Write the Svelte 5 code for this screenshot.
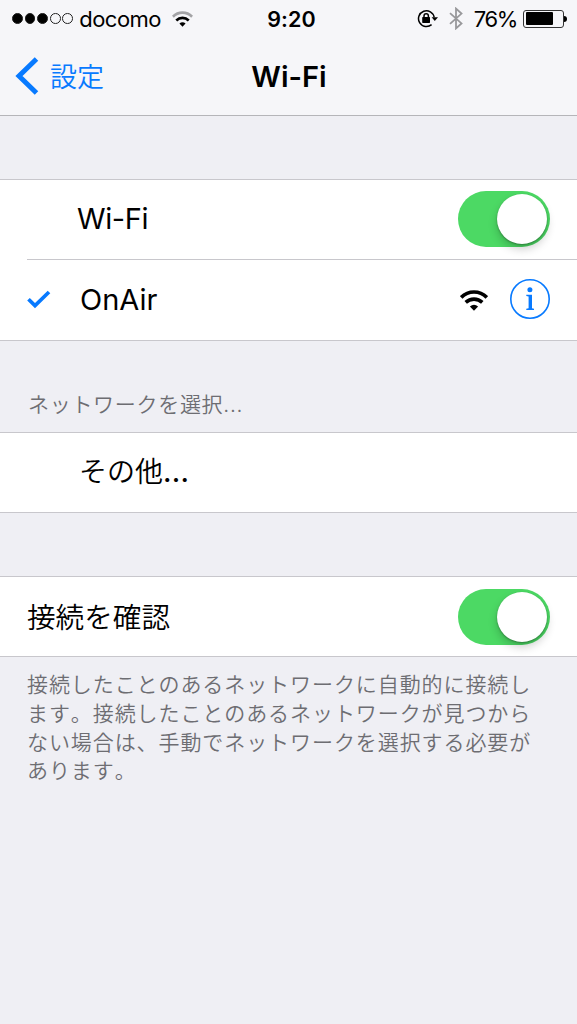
<script>
  let wifi = $state(true);
  let askToJoin = $state(true);
  const signal = [true, true, true, false, false];
  const battery = 76;
  const note = [
    '接続したことのあるネットワークに自動的に接続し',
    'ます。接続したことのあるネットワークが見つから',
    'ない場合は、手動でネットワークを選択する必要が',
    'あります。'
  ];
</script>

{#snippet wifiIcon(cls, outer)}
  <svg class={cls} viewBox="0 0 28 21" fill="none" stroke="#000" stroke-width="3.6">
    <path d="M1.2 7.4C8.4 .2 19.6 .2 26.8 7.4" stroke={outer} />
    <path d="M5.7 12.4C10.4 8 17.6 8 22.3 12.4" />
    <path d="M9.9 16.5Q14 13 18.1 16.5L14 20.8Z" fill="#000" stroke="none" />
  </svg>
{/snippet}

{#snippet toggle(on, label, flip)}
  <button class="switch" class:on role="switch" aria-checked={on} aria-label={label} onclick={flip}>
    <span class="knob"></span>
  </button>
{/snippet}

<main>
  <header>
    <div class="status">
      <div class="left">
        <span class="dots">
          {#each signal as full}<i class:full></i>{/each}
        </span>
        <span class="carrier">docomo</span>
        {@render wifiIcon('wifi-small', '#a3a3a6')}
      </div>
      <span class="time">9:20</span>
      <div class="right">
        <svg class="lock" viewBox="0 0 21 19" fill="none" stroke="#000" stroke-width="1.5">
          <path d="M14.6 15.6A7.9 7.9 0 1 1 17.2 8.3" />
          <path d="M14.6 8.2H21L17.8 12Z" fill="#000" stroke="none" />
          <rect x="5.2" y="8.1" width="7.8" height="5.8" rx=".6" fill="#000" stroke="none" />
          <path d="M7 8.4V6.9a2.2 2.2 0 0 1 4.4 0V8.4" />
        </svg>
        <svg class="bluetooth" viewBox="0 0 14 23" fill="none" stroke="#98989b" stroke-width="1.8">
          <path d="M1 6.2 12.5 16.4 7 21.4V1.6L12.5 6.6 1 16.8" />
        </svg>
        <span class="percent">{battery}%</span>
        <span class="battery"><b style:width="{battery}%"></b></span>
      </div>
    </div>
    <nav>
      <a class="back" href="#settings">
        <svg viewBox="0 0 24 38" fill="none" stroke="#087aff" stroke-width="5">
          <path d="M21.5 2 4 19 21.5 36" />
        </svg>
        <span>設定</span>
      </a>
      <h1>Wi-Fi</h1>
    </nav>
  </header>

  <section class="group networks">
    <div class="row">
      <span class="label wifi-label">Wi-Fi</span>
      {@render toggle(wifi, 'Wi-Fi', () => (wifi = !wifi))}
    </div>
    <div class="row divided">
      <svg class="check" viewBox="0 0 24 19" fill="none" stroke="#087aff" stroke-width="3.7">
        <path d="M1.5 9.2 8 15.6 22 2" />
      </svg>
      <span class="label network">OnAir</span>
      {@render wifiIcon('wifi-large', '#000')}
      <button class="info" aria-label="OnAir">
        <svg viewBox="0 0 40 40">
          <circle cx="20" cy="20" r="19.2" fill="none" stroke="#087aff" stroke-width="1.6" />
          <circle cx="19.9" cy="10.8" r="2.5" fill="#087aff" />
          <path d="M16.3 15.8H22V29.3L24 29.8V31H16.3V29.8L18.6 29.3V17.5L16.3 17Z" fill="#087aff" />
        </svg>
      </button>
    </div>
  </section>

  <h2>ネットワークを選択<span>...</span></h2>
  <section class="group">
    <div class="row"><span class="label other">その他<span class="ellipsis">...</span></span></div>
  </section>

  <section class="group confirm">
    <div class="row">
      <span class="label ja">接続を確認</span>
      {@render toggle(askToJoin, '接続を確認', () => (askToJoin = !askToJoin))}
    </div>
  </section>
  <p>{#each note as line}<span>{line}</span>{/each}</p>
</main>

<style>
  :global(body) {
    margin: 0;
    background: #efeff4;
  }
  main {
    min-height: 1024px;
    background: #efeff4;
    color: #000;
    font-family: Inter, "Noto Sans CJK JP", sans-serif;
    text-spacing-trim: space-all;
  }
  * {
    box-sizing: border-box;
  }
  header {
    height: 116px;
    background: #f6f6f9;
    border-bottom: 1px solid #b5b5b9;
  }
  .status {
    height: 37px;
    display: grid;
    grid-template-columns: 1fr auto 1fr;
    align-items: center;
    padding: 0 9px 0 12px;
    font-size: 22px;
  }
  .left,
  .right,
  .dots {
    display: flex;
    align-items: center;
  }
  .right {
    justify-content: flex-end;
  }
  .dots {
    gap: 1.8px;
  }
  .dots i {
    width: 10.8px;
    height: 10.8px;
    border: 1px solid #222;
    border-radius: 50%;
  }
  .dots .full {
    background: #000;
  }
  .carrier {
    margin-left: 6px;
    letter-spacing: -0.5px;
  }
  .wifi-small {
    width: 21px;
    height: 16px;
    margin-left: 11px;
  }
  .time {
    font-weight: 600;
    font-size: 21.5px;
    letter-spacing: 0.1px;
    padding-left: 3px;
  }
  .lock {
    width: 21px;
    height: 19px;
  }
  .bluetooth {
    width: 14px;
    height: 23px;
    margin-left: 11px;
  }
  .percent {
    margin-left: 11px;
    letter-spacing: -1.4px;
  }
  .battery {
    position: relative;
    width: 41px;
    height: 18px;
    margin: 0 4px 0 6px;
    padding: 1.5px;
    border: 1px solid #333;
    border-radius: 3px;
  }
  .battery b {
    display: block;
    height: 100%;
    background: #000;
    border-radius: 1px;
  }
  .battery::after {
    content: "";
    position: absolute;
    right: -4px;
    top: 5px;
    width: 3px;
    height: 6px;
    background: #000;
    border-radius: 0 3px 3px 0;
  }
  nav {
    height: 78px;
    display: grid;
    grid-template-columns: 1fr auto 1fr;
    align-items: center;
  }
  .back {
    display: flex;
    align-items: center;
    color: #087aff;
    text-decoration: none;
    font-size: 27px;
    font-weight: 350;
    padding-left: 15px;
  }
  .back svg {
    width: 24px;
    height: 38px;
    margin-right: 11px;
  }
  .back span {
    padding-bottom: 2px;
  }
  h1 {
    margin: 0;
    padding-left: 1px;
    font-size: 29px;
    font-weight: 600;
  }
  .group {
    background: #fff;
    border: solid #c8c7cc;
    border-width: 1px 0;
  }
  .networks {
    margin-top: 63px;
  }
  .row {
    height: 79px;
    display: flex;
    align-items: center;
    padding: 0 27px 2px;
  }
  .divided {
    height: 81px;
    margin-left: 27px;
    padding-left: 0;
    border-top: 1px solid #c8c7cc;
  }
  .label {
    flex: 1;
    font-size: 29px;
    white-space: nowrap;
  }
  .wifi-label {
    padding-left: 50px;
    letter-spacing: -0.4px;
  }
  .check {
    width: 24px;
    height: 19px;
  }
  .network {
    padding-left: 29px;
  }
  .wifi-large {
    width: 28px;
    height: 21px;
    margin: 2px 22px 0 0;
  }
  .info {
    width: 40px;
    height: 40px;
    padding: 0;
    border: 0;
    background: none;
  }
  .info svg {
    display: block;
  }
  .switch {
    width: 92px;
    height: 56px;
    padding: 3px;
    border: 0;
    border-radius: 28px;
    background: #e5e5ea;
    display: flex;
  }
  .switch.on {
    background: #4cd964;
    justify-content: flex-end;
  }
  .knob {
    width: 50px;
    height: 50px;
    border-radius: 50%;
    background: #fff;
    box-shadow: 0 5px 10px rgb(0 0 0 / 0.2), 0 1px 2px rgb(0 0 0 / 0.3);
  }
  h2 {
    margin: 0;
    height: 91px;
    padding: 49px 28px 0;
    font-size: 21px;
    line-height: 30px;
    font-weight: 350;
    letter-spacing: 0.7px;
    color: #6d6d72;
  }
  .other {
    padding: 0 0 3px 52px;
    font-size: 28px;
    font-weight: 350;
  }
  .ellipsis {
    font-weight: 500;
    letter-spacing: 0.2px;
  }
  .confirm {
    margin-top: 63px;
  }
  .confirm .row {
    padding-bottom: 0;
  }
  .ja {
    padding-bottom: 3px;
    font-weight: 350;
    font-size: 28.6px;
  }
  p {
    margin: 0;
    padding: 14px 27px;
    font-size: 21px;
    line-height: 28.8px;
    font-weight: 350;
    letter-spacing: 0.92px;
    font-kerning: none;
    font-feature-settings: "chws" 0, "halt" 0, "palt" 0;
    color: #6d6d72;
  }
  p span {
    display: block;
    white-space: nowrap;
  }
</style>
